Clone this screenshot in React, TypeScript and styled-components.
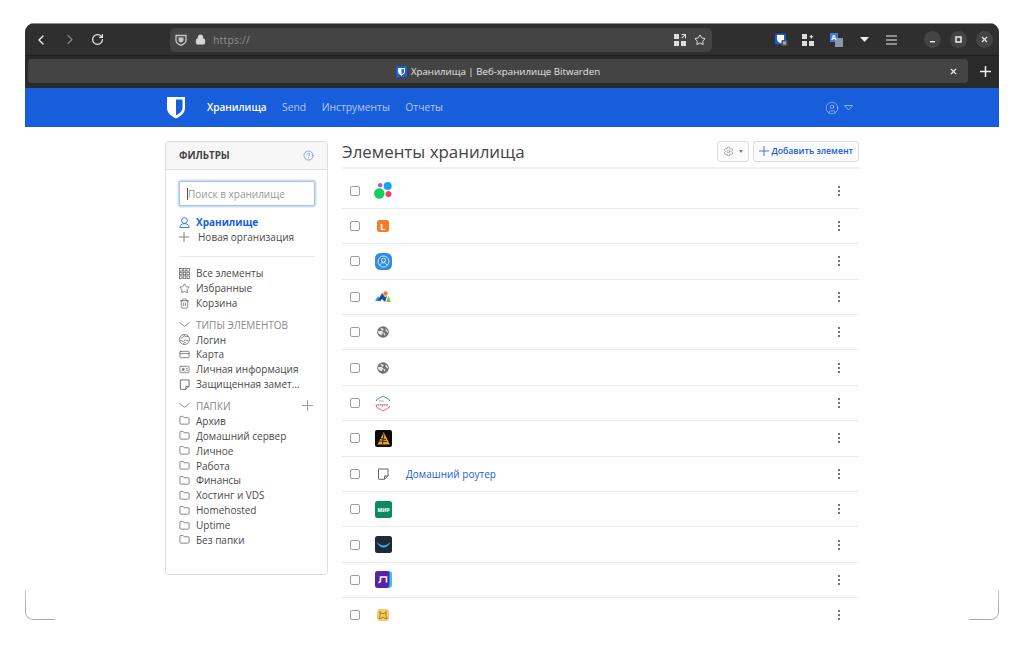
import React from "react";
import styled, { createGlobalStyle } from "styled-components";
import {
  ChevronLeft,
  ChevronRight,
  CircleHelp,
  CircleUser,
  CreditCard,
  Folder,
  IdCard,
  Lock,
  RotateCw,
  Settings,
  Star,
  Trash2,
  X,
} from "lucide-react";

const GlobalStyle = createGlobalStyle`
  html, body {
    margin: 0;
    padding: 0;
    background: #fff;
    overflow: hidden;
  }
  body {
    font-family: "Open Sans", "Liberation Sans", sans-serif;
    font-size: 10px;
    color: #3a3a3a;
  }
`;

const Frame = styled.div`
  position: relative;
  box-sizing: border-box;
  width: 974px;
  height: 598px;
  margin: 23px 0 0 25px;
  border-radius: 9px 9px 0 0;
  overflow: hidden;
  background: #fff;
`;

const Toolbar = styled.div`
  box-sizing: border-box;
  height: 33px;
  display: flex;
  align-items: center;
  background: #2f2f2f;
  border-top: 1px solid #8c8c8c;
  border-bottom: 1px solid #1f1f1f;
  color: #f0f0f0;
`;

const ToolButton = styled.span<{ $left?: number; $dim?: boolean }>`
  display: flex;
  align-items: center;
  justify-content: center;
  width: 16px;
  height: 16px;
  margin-left: ${(p) => p.$left ?? 0}px;
  color: ${(p) => (p.$dim ? "#8a8a8a" : "#f0f0f0")};
`;

const UrlBar = styled.div`
  box-sizing: border-box;
  width: 542px;
  height: 24px;
  margin-left: 65px;
  padding: 0 4px 0 5px;
  display: flex;
  align-items: center;
  background: #444;
  border-radius: 5px;
  color: #d8d8d8;
`;

const UrlText = styled.span`
  flex: 1;
  margin-left: 5px;
  font-size: 10.4px;
  color: #8e8e8e;
  letter-spacing: 0.2px;
`;

const WindowButton = styled.span<{ $left: number }>`
  display: flex;
  align-items: center;
  justify-content: center;
  width: 17px;
  height: 17px;
  margin-left: ${(p) => p.$left}px;
  border-radius: 50%;
  background: #444;
  color: #eee;
`;

const TabBar = styled.div`
  box-sizing: border-box;
  height: 32px;
  padding: 3px 8px 5px 3px;
  display: flex;
  align-items: center;
  background: #2a2a2a;
  color: #f0f0f0;
`;

const Tab = styled.div`
  flex: 1;
  height: 24px;
  padding: 0 10px 0 6px;
  display: flex;
  align-items: center;
  background: #444;
  border-radius: 4px;
`;

const TabTitle = styled.div`
  flex: 1;
  display: flex;
  align-items: center;
  justify-content: center;
  gap: 4px;
  margin-left: 13px;
  font-size: 9.7px;
  color: #e4e4e4;
`;

const NewTab = styled.span`
  display: flex;
  margin-left: 12px;
  color: #f0f0f0;
`;

const NavBar = styled.nav`
  box-sizing: border-box;
  height: 39px;
  padding-left: 141px;
  display: flex;
  align-items: center;
  background: #175ddc;
`;

const NavLink = styled.a<{ $active?: boolean }>`
  margin-right: 15.5px;
  padding-bottom: 1px;
  font-size: ${(p) => (p.$active ? 10 : 10.3)}px;
  font-weight: ${(p) => (p.$active ? 600 : 400)};
  color: ${(p) => (p.$active ? "#fff" : "rgba(255, 255, 255, 0.68)")};
`;

const NavLogo = styled.span`
  display: flex;
  margin-right: 21px;
`;

const NavUser = styled.span`
  display: flex;
  align-items: center;
  gap: 5px;
  margin-left: 366px;
  color: rgba(255, 255, 255, 0.62);
`;

const Page = styled.main`
  padding: 14px 0 0 140px;
  display: flex;
  align-items: flex-start;
  gap: 14px;
`;

const FilterCard = styled.aside`
  box-sizing: border-box;
  width: 163px;
  height: 434px;
  flex: none;
  background: #fff;
  border: 1px solid #dfdfdf;
  border-radius: 3px;
`;

const FilterHead = styled.div`
  box-sizing: border-box;
  height: 28px;
  padding: 0 13px;
  display: flex;
  align-items: center;
  justify-content: space-between;
  background: #f7f7f7;
  border-bottom: 1px solid #dfdfdf;
  font-size: 9.8px;
  font-weight: 700;
  color: #444;
`;

const FilterBody = styled.div`
  padding: 11px 12px 0 13px;
`;

const Search = styled.div`
  box-sizing: border-box;
  height: 25px;
  padding-left: 7px;
  display: flex;
  align-items: center;
  background: #fff;
  border: 1px solid #a9c3f1;
  border-radius: 2px;
  box-shadow: 0 0 0 1.5px #cfdcf7;
  font-size: 10px;
  color: #9a9a9a;
`;

const Caret = styled.span`
  width: 1px;
  height: 12px;
  background: #555;
`;

const Row = styled.div<{ $active?: boolean; $gap?: number }>`
  height: 14.9px;
  display: flex;
  align-items: center;
  gap: ${(p) => p.$gap ?? 6}px;
  font-size: 10px;
  white-space: nowrap;
  font-weight: ${(p) => (p.$active ? 700 : 400)};
  color: ${(p) => (p.$active ? "#175ddc" : "#4a4a4a")};
  svg {
    flex: none;
  }
`;

const Heading = styled(Row)`
  margin-top: 6.8px;
  color: #8a8a8a;
`;

const HeadingAdd = styled.span`
  display: flex;
  margin-left: auto;
  margin-right: 2px;
`;

const Group = styled.div<{ $top: number }>`
  margin-top: ${(p) => p.$top}px;
`;

const Divider = styled.hr`
  margin: 11px 0 9px;
  border: 0;
  border-top: 1px solid #e8e8e8;
`;

const Content = styled.section`
  width: 517px;
  flex: none;
`;

const ContentHead = styled.header`
  box-sizing: border-box;
  height: 28px;
  margin-bottom: 4.5px;
  display: flex;
  align-items: center;
  gap: 4px;
  border-bottom: 2px solid #eef0f2;
`;

const Title = styled.h1`
  flex: 1;
  margin: 0 0 5px;
  font-size: 16.9px;
  font-weight: 400;
  color: #444;
`;

const HeadButton = styled.button`
  box-sizing: border-box;
  height: 21px;
  margin-bottom: 6px;
  padding: 0 5px;
  display: flex;
  align-items: center;
  gap: 2px;
  background: #fbfbfb;
  border: 1px solid #dcdcdc;
  border-radius: 3px;
  font-family: inherit;
  font-size: 8.7px;
  font-weight: 600;
  color: #175ddc;
`;

const Arrow = styled.span`
  width: 0;
  height: 0;
  margin-left: 3px;
  border: 2.5px solid transparent;
  border-top: 3px solid #777;
  border-bottom: 0;
`;

const Item = styled.div`
  box-sizing: border-box;
  height: 35.4px;
  padding-left: 8px;
  display: flex;
  align-items: center;
  border-bottom: 1px solid #e9eaec;
`;

const Check = styled.span`
  box-sizing: border-box;
  width: 10px;
  height: 10px;
  flex: none;
  border: 1.5px solid #9c9cab;
  border-radius: 2px;
`;

const ItemIcon = styled.span`
  width: 16px;
  height: 16px;
  margin-left: 15px;
  flex: none;
  display: flex;
  align-items: center;
  justify-content: center;
  svg {
    flex: none;
  }
`;

const ItemName = styled.a`
  flex: 1;
  margin-left: 15px;
  font-size: 10px;
  color: #175ddc;
`;

const Dots = styled.span`
  display: flex;
  flex-direction: column;
  gap: 2px;
  margin-right: 19px;
  span {
    width: 2px;
    height: 2px;
    border-radius: 50%;
    background: #444;
  }
`;

const Corner = styled.div<{ $side: "left" | "right" }>`
  position: fixed;
  top: 590px;
  left: ${(p) => (p.$side === "left" ? 25 : 969)}px;
  box-sizing: border-box;
  width: 30px;
  height: 30px;
  border-bottom: 1.5px solid #a8a8a8;
  border-${(p) => p.$side}: 1.5px solid #a8a8a8;
  border-bottom-${(p) => p.$side}-radius: 8px;
  mask-image: linear-gradient(to bottom, rgba(0, 0, 0, 0.55), #000 60%);
`;

const Shield = ({ size = 16, fill = "#fff" }: { size?: number; fill?: string }) => (
  <svg width={size} height={size * 1.15} viewBox="0 0 20 23">
    <path
      fill={fill}
      fillRule="evenodd"
      d="M1 1h18v11c0 5-4.500 8.500-9 10.500C5.500 20.500 1 17 1 12V1zm9 2.500v15.800c3-1.600 6.500-4 6.500-7.300V3.500H10z"
    />
  </svg>
);

const ThinPlus = ({ size, color = "currentColor", weight = 0.8 }: { size: number; color?: string; weight?: number }) => (
  <svg width={size} height={size} viewBox={`0 0 ${size} ${size}`} stroke={color} strokeWidth={weight}>
    <path d={`M0 ${size / 2}H${size}M${size / 2} 0V${size}`} />
  </svg>
);

const WideChevron = () => (
  <svg width="11" height="11" viewBox="0 0 11 11" fill="none" stroke="#777" strokeWidth="0.800">
    <path d="M.5 3.500l5 3.800 5-3.800" />
  </svg>
);

const UserIcon = () => (
  <svg width="11" height="11" viewBox="0 0 11 11" fill="none" stroke="#175ddc" strokeWidth="0.800">
    <circle cx="5.500" cy="3.500" r="2.900" />
    <path d="M.8 10.500c0-2.500 2-3.800 4.700-3.800s4.700 1.300 4.700 3.800z" />
  </svg>
);

const Tiles = ({ plus }: { plus?: boolean }) => (
  <svg width="12" height="12" viewBox="0 0 12 12" fill="#dedede">
    <rect x="0" y="0" width="5" height="5" />
    <rect x="0" y="7" width="5" height="5" />
    <rect x="7" y="7" width="5" height="5" />
    {plus ? (
      <path d="M8.700 1h1.200v1.200h1.300v1.100H9.900v1.200H8.700V3.300H7.500V2.200h1.200z" />
    ) : (
      <path d="M7.500 0H12v4.500h-1V1.700L8 4.500 7.300 3.800 10.200 1H7.500z" />
    )}
  </svg>
);

const ShieldOutline = () => (
  <svg width="12" height="12" viewBox="0 0 12 12">
    <path d="M1 1.500h10v5c0 2.500-3 4-5 4.800-2-.8-5-2.300-5-4.800z" fill="none" stroke="#c8c8c8" strokeWidth="1.300" />
    <path d="M3.500 3.500h5v2.800c0 1-1.500 1.900-2.500 2.400-1-.5-2.500-1.400-2.500-2.400z" fill="#c8c8c8" />
  </svg>
);

const BitwardenAddon = () => (
  <svg width="13" height="14" viewBox="0 0 13 14">
    <rect x="0" y="0.500" width="11" height="11" rx="1.500" fill="#175ddc" />
    <path d="M2 2h7v4.500c0 1.500-2 3-3.500 3.800C4 9.500 2 8 2 6.500z" fill="#fff" />
    <rect x="6.500" y="7" width="6" height="6" rx="1" fill="#555" />
    <rect x="8" y="8.500" width="3" height="3" fill="#aaa" />
  </svg>
);

const TranslateAddon = () => (
  <svg width="13" height="14" viewBox="0 0 13 14">
    <rect x="0" y="0" width="8" height="9" fill="#3d7be0" />
    <rect x="5" y="5" width="8" height="9" fill="#8a97a8" />
    <text x="1.200" y="7" fontSize="7" fontWeight="700" fill="#fff" fontFamily="Open Sans, sans-serif">
      A
    </text>
  </svg>
);

const GridIcon = () => (
  <svg width="11" height="11" viewBox="0 0 11 11" fill="none" stroke="#555" strokeWidth="0.700">
    {[0.500, 4.200, 7.900].flatMap((x) =>
      [0.500, 4.200, 7.900].map((y) => <rect key={`${x}-${y}`} x={x} y={y} width="2.600" height="2.600" />),
    )}
  </svg>
);

const LoginIcon = () => (
  <svg width="11" height="11" viewBox="0 0 11 11" fill="none" stroke="#555" strokeWidth="0.700">
    <circle cx="5.500" cy="5.500" r="5" />
    <path d="M1.500 4c1.500.5 3-.5 3.500-2.500 1 1 2.500 1 4 1M1 6.500c1.500-.5 2 1 3 1s1-1.500 2.500-1.300c1 .2 2 .8 3 .3M4.500 10c0-1 1-1.500 2-1.500" />
  </svg>
);

const NoteIcon = ({ size, color }: { size: number; color: string }) => (
  <svg width={size} height={size} viewBox="0 0 12 12" fill="none" stroke={color} strokeWidth="0.900">
    <path d="M1.500 1h9.500v6.800L7.500 11.300H2a.5.500 0 0 1-.5-.5z" />
    <path d="M7.500 11.300V8h3.500" />
  </svg>
);

const siteIcons: Record<string, React.ReactNode> = {
  dots: (
    <svg width="18" height="17" viewBox="0 0 18 17">
      <circle cx="5.300" cy="11.500" r="5.200" fill="#12cf5f" />
      <circle cx="13.700" cy="4" r="4" fill="#12a5f4" />
      <circle cx="14.500" cy="12" r="3" fill="#f43f5e" />
      <circle cx="6.200" cy="3.200" r="2.200" fill="#a55ee8" />
    </svg>
  ),
  orange: (
    <svg width="12" height="12" viewBox="0 0 12 12">
      <rect width="12" height="12" rx="2.500" fill="#f47b2a" />
      <text x="3" y="9.500" fontSize="9.500" fontWeight="700" fill="#fff" fontFamily="Open Sans, sans-serif">
        L
      </text>
    </svg>
  ),
  person: (
    <svg width="17" height="17" viewBox="0 0 17 17" fill="none" stroke="#fff" strokeWidth="0.800">
      <rect width="17" height="17" rx="5.500" fill="#2f8be6" stroke="none" />
      <circle cx="8.500" cy="8.500" r="5.500" />
      <circle cx="8.500" cy="7.200" r="2" />
      <path d="M5 12c.8-1.800 2-2.300 3.500-2.300S11.200 10.200 12 12" />
    </svg>
  ),
  mountains: (
    <svg width="16" height="12" viewBox="0 0 16 12">
      <path d="M0 10l3-5 3 5z" fill="#26a6b8" />
      <path d="M11 11l2.500-6 2.500 6z" fill="#8cc04b" />
      <path d="M3 9l4-7 3 4 2-1-2 6-3-3-2 2z" fill="#254a9e" />
      <circle cx="10.500" cy="2.500" r="2.200" fill="#ef7d22" />
    </svg>
  ),
  globe: (
    <svg width="12" height="12" viewBox="0 0 12 12">
      <circle cx="6" cy="6" r="5.800" fill="#707070" />
      <path d="M3 1.500c1 .7 2.500.5 3.500 1.500S5 5 4 5 1.500 4 1 5.500 3 9 4.500 9 5 6.500 6.500 6.500 9 8 8 10zM8.500 2.500c1 .5 2.500 2 2.500 3.500S9 5 8.500 4.500z" fill="#e6e6e6" />
    </svg>
  ),
  hexagon: (
    <svg width="16" height="17" viewBox="0 0 16 17">
      <path d="M1.500 6V4.800L8 1l6.500 3.800V6" fill="none" stroke="#3b82d8" strokeWidth="0.900" />
      <path d="M1.500 11v1.200L8 16l6.500-3.800V11" fill="none" stroke="#ec5a78" strokeWidth="0.900" />
      <text x="4" y="7.300" fontSize="3.200" fill="#3b6fc8" fontFamily="Open Sans, sans-serif">
        гос
      </text>
      <text x="0.500" y="10.800" fontSize="3.600" fontWeight="700" fill="#e0506e" fontFamily="Open Sans, sans-serif">
        услуги
      </text>
    </svg>
  ),
  pyramid: (
    <svg width="17" height="17" viewBox="0 0 17 17">
      <rect width="17" height="17" rx="2" fill="#0a0a0a" />
      <path d="M8.800 2l6 12.500H2.500z" fill="#efa316" />
      <path d="M5 8.500l6 1M4 11l8 .5M9 3.500L7.500 14" stroke="#0a0a0a" strokeWidth="0.800" />
    </svg>
  ),
  note: <NoteIcon size={12} color="#555" />,
  mir: (
    <svg width="17" height="17" viewBox="0 0 17 17">
      <rect width="17" height="17" rx="2.500" fill="#0b8a62" />
      <text x="8.500" y="10.500" textAnchor="middle" fontSize="5" fontWeight="800" fill="#e8f5ef" fontFamily="Open Sans, sans-serif">
        МИР
      </text>
    </svg>
  ),
  envelope: (
    <svg width="17" height="17" viewBox="0 0 17 17">
      <rect width="17" height="17" rx="2.500" fill="#1d2a3a" />
      <path d="M1.500 6c3 2.500 5 3.500 7 3.500s4-1 7-3.500c-2 4-4.500 5.500-7 5.500S3.500 10 1.500 6z" fill="#37b4e8" />
    </svg>
  ),
  purple: (
    <svg width="17" height="17" viewBox="0 0 17 17">
      <rect width="17" height="17" rx="3" fill="#35c8ee" />
      <path d="M3 0h9c2 0 3 1.500 2.500 3.500v10c0 2-1 3.500-3 3.500H3c-2 0-3-1-3-3V3c0-2 1-3 3-3z" fill="#5a22a8" />
      <path d="M3.500 11.500c1.500 0 2-.5 2-2V6h6v5.500" fill="none" stroke="#fff" strokeWidth="1.600" />
    </svg>
  ),
  cat: (
    <svg width="12" height="12" viewBox="0 0 12 12">
      <rect width="12" height="12" rx="3" fill="#f6cb62" />
      <path d="M3 2.500l1.500 2h3l1.500-2v5l1 2H8L6 8 4 9.500H2l1-2z" fill="none" stroke="#8a6a20" strokeWidth="0.800" />
    </svg>
  ),
};

const items: { icon: string; name?: string }[] = [
  { icon: "dots" },
  { icon: "orange" },
  { icon: "person" },
  { icon: "mountains" },
  { icon: "globe" },
  { icon: "globe" },
  { icon: "hexagon" },
  { icon: "pyramid" },
  { icon: "note", name: "Домашний роутер" },
  { icon: "mir" },
  { icon: "envelope" },
  { icon: "purple" },
  { icon: "cat" },
];

const folders = ["Архив", "Домашний сервер", "Личное", "Работа", "Финансы", "Хостинг и VDS", "Homehosted", "Uptime", "Без папки"];

const thin = { size: 11, strokeWidth: 1.5, color: "#555" };

const App: React.FC = () => (
  <>
    <GlobalStyle />
    <Frame>
      <Toolbar>
        <ToolButton $left={8}>
          <ChevronLeft size={16} strokeWidth={2} />
        </ToolButton>
        <ToolButton $left={13} $dim>
          <ChevronRight size={17} strokeWidth={1.6} />
        </ToolButton>
        <ToolButton $left={11}>
          <RotateCw size={13} strokeWidth={2.2} />
        </ToolButton>
        <UrlBar>
          <ShieldOutline />
          <ToolButton $left={5}>
            <Lock size={11} strokeWidth={2} fill="#d8d8d8" color="#d8d8d8" />
          </ToolButton>
          <UrlText>https://</UrlText>
          <Tiles />
          <ToolButton $left={6}>
            <Star size={12} strokeWidth={1.8} />
          </ToolButton>
        </UrlBar>
        <ToolButton $left={61}>
          <BitwardenAddon />
        </ToolButton>
        <ToolButton $left={11}>
          <Tiles plus />
        </ToolButton>
        <ToolButton $left={12}>
          <TranslateAddon />
        </ToolButton>
        <ToolButton $left={12}>
          <svg width="9" height="5" viewBox="0 0 9 5">
            <path d="M0 0h9L4.500 5z" fill="#eee" />
          </svg>
        </ToolButton>
        <ToolButton $left={12}>
          <svg width="12" height="10" viewBox="0 0 12 10" stroke="#eee" strokeWidth="1.200">
            <path d="M0 1h11M0 5h11M0 9h11" />
          </svg>
        </ToolButton>
        <WindowButton $left={24}>
          <svg width="7" height="7" viewBox="0 0 7 7">
            <rect x="1" y="5" width="5" height="1.400" fill="#eee" />
          </svg>
        </WindowButton>
        <WindowButton $left={9}>
          <svg width="7" height="7" viewBox="0 0 7 7">
            <rect x="1" y="1" width="5" height="5" fill="none" stroke="#eee" strokeWidth="1.500" />
          </svg>
        </WindowButton>
        <WindowButton $left={9}>
          <X size={9} strokeWidth={3} />
        </WindowButton>
      </Toolbar>
      <TabBar>
        <Tab>
          <TabTitle>
            <svg width="11" height="11" viewBox="0 0 11 11">
              <rect width="11" height="11" rx="1" fill="#175ddc" />
              <path d="M2 2h7v4c0 1.500-2 2.800-3.500 3.800C4 8.800 2 7.500 2 6z" fill="#fff" />
              <path d="M5.500 3.200H8v2.800c0 .8-1.500 1.700-2.500 2.300z" fill="#175ddc" />
            </svg>
            Хранилища | Веб-хранилище Bitwarden
          </TabTitle>
          <X size={9} strokeWidth={3} color="#f0f0f0" />
        </Tab>
        <NewTab>
          <ThinPlus size={11} weight={1.5} />
        </NewTab>
      </TabBar>
      <NavBar>
        <NavLogo>
          <Shield size={20} />
        </NavLogo>
        <NavLink $active>Хранилища</NavLink>
        <NavLink>Send</NavLink>
        <NavLink>Инструменты</NavLink>
        <NavLink>Отчеты</NavLink>
        <NavUser>
          <CircleUser size={14} strokeWidth={1.2} />
          <svg width="9" height="6" viewBox="0 0 9 6">
            <path d="M.5.500h8L4.500 5z" fill="none" stroke="currentColor" strokeWidth="0.800" />
          </svg>
        </NavUser>
      </NavBar>
      <Page>
        <FilterCard>
          <FilterHead>
            ФИЛЬТРЫ
            <CircleHelp size={11} strokeWidth={1.5} color="#4f86e8" />
          </FilterHead>
          <FilterBody>
            <Search>
              <Caret />
              Поиск в хранилище
            </Search>
            <Group $top={9}>
              <Row $active>
                <UserIcon />
                Хранилище
              </Row>
              <Row $gap={9}>
                <ThinPlus size={10} color="#666" />
                Новая организация
              </Row>
            </Group>
            <Divider />
            <Group $top={0}>
              <Row>
                <GridIcon />
                Все элементы
              </Row>
              <Row>
                <Star {...thin} />
                Избранные
              </Row>
              <Row>
                <Trash2 {...thin} />
                Корзина
              </Row>
            </Group>
            <Heading>
              <WideChevron />
              ТИПЫ ЭЛЕМЕНТОВ
            </Heading>
            <Row>
              <LoginIcon />
              Логин
            </Row>
            <Row>
              <CreditCard {...thin} />
              Карта
            </Row>
            <Row>
              <IdCard {...thin} />
              Личная информация
            </Row>
            <Row>
              <NoteIcon size={11} color="#555" />
              Защищенная замет...
            </Row>
            <Heading>
              <WideChevron />
              ПАПКИ
              <HeadingAdd>
                <ThinPlus size={11} color="#888" />
              </HeadingAdd>
            </Heading>
            {folders.map((name) => (
              <Row key={name}>
                <Folder {...thin} />
                {name}
              </Row>
            ))}
          </FilterBody>
        </FilterCard>
        <Content>
          <ContentHead>
            <Title>Элементы хранилища</Title>
            <HeadButton>
              <Settings size={11} strokeWidth={1.5} color="#8a8a8a" />
              <Arrow />
            </HeadButton>
            <HeadButton>
              <ThinPlus size={10} />
              Добавить элемент
            </HeadButton>
          </ContentHead>
          {items.map((item, i) => (
            <Item key={i}>
              <Check />
              <ItemIcon>{siteIcons[item.icon]}</ItemIcon>
              <ItemName>{item.name}</ItemName>
              <Dots>
                <span />
                <span />
                <span />
              </Dots>
            </Item>
          ))}
        </Content>
      </Page>
    </Frame>
    <Corner $side="left" />
    <Corner $side="right" />
  </>
);

export default App;
